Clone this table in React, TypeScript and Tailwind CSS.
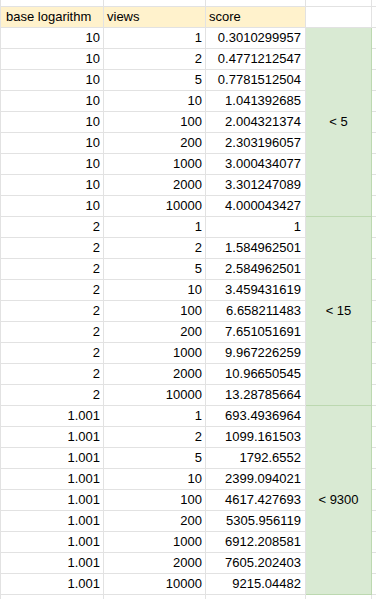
import React from 'react'

type Group = { base: string; label: string; scores: string[] }

const views = ['1', '2', '5', '10', '100', '200', '1000', '2000', '10000']

const groups: Group[] = [
  {
    base: '10',
    label: '< 5',
    scores: ['0.3010299957', '0.4771212547', '0.7781512504', '1.041392685', '2.004321374', '2.303196057', '3.000434077', '3.301247089', '4.000043427'],
  },
  {
    base: '2',
    label: '< 15',
    scores: ['1', '1.584962501', '2.584962501', '3.459431619', '6.658211483', '7.651051691', '9.967226259', '10.96650545', '13.28785664'],
  },
  {
    base: '1.001',
    label: '< 9300',
    scores: ['693.4936964', '1099.161503', '1792.6552', '2399.094021', '4617.427693', '5305.956119', '6912.208581', '7605.202403', '9215.04482'],
  },
]

const line = 'border-[#e2e2e2]'

function StripRow({ h }: { h: string }) {
  return (
    <div className={`flex ${h}`}>
      <div className={`w-[104px] border-l border-r border-b ${line}`} />
      <div className={`w-[102px] border-r border-b ${line}`} />
      <div className={`w-[100px] border-r border-b ${line}`} />
      <div className={`w-[66px] border-r border-b ${line}`} />
      <div className={`flex-1 border-b ${line}`} />
    </div>
  )
}

export default function App() {
  const rows = groups.flatMap((g) => g.scores.map((s, i) => ({ base: g.base, view: views[i], score: s })))

  return (
    <div className="w-[376px] h-[599px] overflow-hidden bg-white text-[13px] text-black font-['Liberation_Sans',Arial,sans-serif]">
      <StripRow h="h-[7px]" />

      {/* Header */}
      <div className="flex h-[21px] leading-[20px]">
        <div className={`w-[104px] pl-[5px] bg-[#fff2cc] border-l border-r border-b ${line}`}>base logarithm</div>
        <div className={`w-[102px] pl-[3px] bg-[#fff2cc] border-r border-b ${line}`}>views</div>
        <div className={`w-[100px] pl-[3px] bg-[#fff2cc] border-r border-b ${line}`}>score</div>
        <div className={`w-[66px] border-r border-b ${line}`} />
        <div className={`flex-1 border-b ${line}`} />
      </div>

      {/* Body */}
      <div className="flex">
        <div className="flex flex-col">
          {rows.map((r, i) => (
            <div key={i} className="flex h-[21px] leading-[20px]">
              <div className={`w-[104px] pr-[3px] text-right border-l border-r border-b ${line}`}>{r.base}</div>
              <div className={`w-[102px] pr-[3px] text-right border-r border-b ${line}`}>{r.view}</div>
              <div className={`w-[100px] pr-[4px] text-right border-r border-b ${line}`}>{r.score}</div>
            </div>
          ))}
        </div>
        <div className="flex flex-col">
          {groups.map((g) => (
            <div
              key={g.label}
              className="w-[66px] h-[189px] flex items-center justify-center bg-[#d9ead3] border-r border-b border-[#bcd8b0]"
            >
              {g.label}
            </div>
          ))}
        </div>
        <div className="flex flex-col flex-1">
          {rows.map((_, i) => (
            <div key={i} className={`h-[21px] border-b ${line}`} />
          ))}
        </div>
      </div>

      <StripRow h="h-[6px]" />
    </div>
  )
}
